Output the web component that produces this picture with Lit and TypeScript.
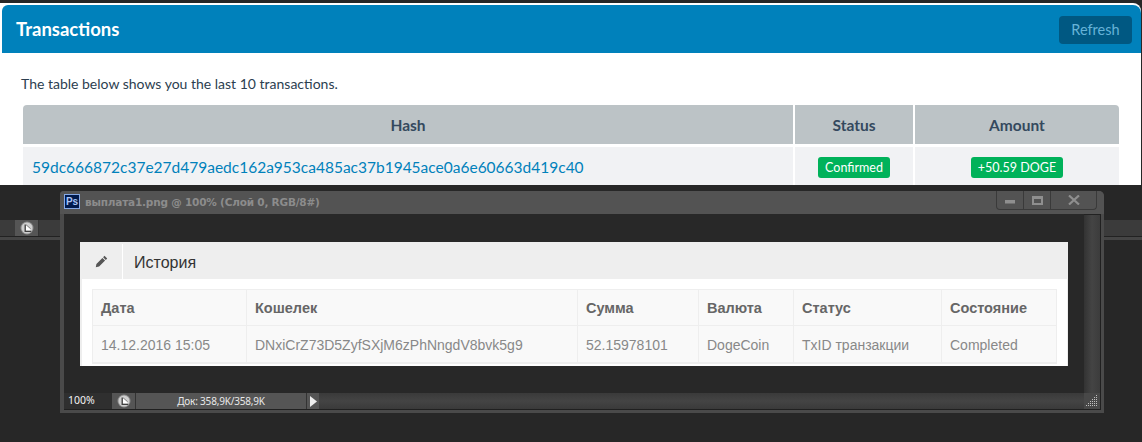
import { LitElement, html, css, svg } from "lit";
import { customElement } from "lit/decorators.js";

const clock = () => html`<svg viewBox="0 0 14 14" width="14" height="14">
  <circle cx="7" cy="7" r="6.5" fill="#8f8f8f"/>
  <circle cx="7" cy="7" r="5.5" fill="#cfcfcf"/>
  <path d="M6 4l4.5 4v1.5H6z" fill="#fff"/>
  <path d="M5.2 3.4v6.9h6" fill="none" stroke="#3f3f3f" stroke-width="1.3"/>
  <path d="M6 3.7l4.7 4.1" fill="none" stroke="#6a6a6a" stroke-width="0.8"/>
</svg>`;

const gripDots = [[10,1],[8,3],[10,3],[6,5],[8,5],[10,5],[4,7],[6,7],[8,7],[10,7],[2,9],[4,9],[6,9],[8,9],[10,9],[0,11],[2,11],[4,11],[6,11],[8,11],[10,11]];

@customElement("app-root")
export class AppRoot extends LitElement {
  static styles = css`
    :host { display: block; width: 1142px; height: 442px; overflow: hidden; background: #272727; font-family: "Liberation Sans", Arial, sans-serif; }
    .panel { margin-top: 3px; width: 1141px; height: 182px; box-sizing: border-box; background: #fff; padding: 2px 0 0 2px; border-top-right-radius: 8px; overflow: hidden; font-family: Lato, sans-serif; }
    .bar { height: 48px; box-sizing: border-box; background: #0081bb; border-radius: 6px 8px 0 0; display: flex; align-items: center; justify-content: space-between; padding: 0 9px 0 14px; }
    .bar h1 { margin: 0; font-size: 18.5px; font-weight: 700; color: #fff; }
    .refresh { width: 73px; height: 28px; margin-top: 1px; border-radius: 4px; background: #005882; color: #66b3d8; font-size: 14.5px; display: flex; align-items: center; justify-content: center; }
    .content { padding: 22px 0 0 19px; color: #2c3e50; }
    .content p { margin: 0 0 13px; font-size: 14px; line-height: 17px; color: #2c3e50; }
    .tx { margin-left: 2px; display: grid; grid-template-columns: 770px 118px 204px; column-gap: 2px; row-gap: 3px; grid-template-rows: 39px 40px; }
    .tx .th { background: #bcc3c6; font-size: 15.5px; font-weight: 700; color: #34495e; display: flex; align-items: center; justify-content: center; }
    .tx .th.first { border-top-left-radius: 4px; }
    .tx .th.last { border-top-right-radius: 4px; }
    .tx .td { background: #f1f2f4; display: flex; align-items: flex-start; justify-content: center; padding-top: 10px; box-sizing: border-box; }
    .tx .td.hash { justify-content: flex-start; padding: 10px 0 0 9px; font-size: 15.5px; line-height: 20px; color: #0081bb; }
    .tag { background: #00b25a; color: #fff; font-size: 12.5px; line-height: 21px; height: 21px; padding: 0 7px; border-radius: 3px; }
    .desktop { position: relative; height: 257px; }
    .strip { position: absolute; top: 35px; height: 16px; background: #3b3b3b; border-bottom: 1px solid #222; box-shadow: 0 3px 0 #454545; }
    .strip.l { left: 0; width: 60px; }
    .strip.r { left: 1104px; width: 38px; }
    .strip .cell { position: absolute; left: 15px; top: 0; width: 23px; height: 16px; background: #555; display: flex; align-items: center; justify-content: center; border-right: 1px solid #333; }
    .win { position: absolute; left: 60px; top: 6px; width: 1044px; height: 222px; box-sizing: border-box; background: #4a4a4a; border-radius: 4px 5px 0 0; padding: 0 3px 3px 4px; display: flex; flex-direction: column; }
    .title { height: 23px; flex: none; background: #535353; margin: 0 -3px 0 -4px; padding-left: 4px; border-radius: 4px 5px 0 0; display: flex; align-items: center; gap: 5px; position: relative; }
    .ps { width: 14px; height: 13px; margin-top: -3px; border: 1px solid #86a9e6; background: #001a4d; color: #a9c4f5; font: 700 10px/13px "Liberation Sans", sans-serif; text-align: center; }
    .ttl { font: 700 10.5px "DejaVu Sans", sans-serif; color: #8c8c8c; margin-top: -1px; white-space: nowrap; letter-spacing: -0.2px; }
    .ctl { position: absolute; left: 936px; top: 0; width: 101px; height: 19px; box-sizing: border-box; border: 1px solid #3a3a3a; border-top: none; border-radius: 0 0 4px 4px; display: grid; grid-template-columns: 27px 27px 1fr; }
    .ctl > div { display: flex; align-items: center; justify-content: center; border-right: 1px solid #3a3a3a; }
    .ctl > div:last-child { border-right: none; }
    .ctl .min { padding-top: 4px; box-sizing: border-box; }
    .main { flex: 1; display: flex; min-height: 0; background: #282828; border-right: 1px solid #202020; }
    .view { flex: 1; padding: 28px 0 0 16px; box-sizing: border-box; }
    .scroll { width: 16px; flex: none; background: linear-gradient(90deg, #333, #444 50%, #3c3c3c); border-top: 1px solid #222; box-sizing: border-box; }
    .status { height: 17px; flex: none; display: flex; background: #383838; border-right: 1px solid #202020; border-bottom: 1px solid #202020; box-sizing: border-box; font: 400 10px "Noto Sans", sans-serif; color: #e8e8e8; }
    .status .zoom { width: 48px; padding-left: 4px; box-sizing: border-box; background: #2f2f2f; line-height: 14px; font-size: 10.5px; color: #f2f2f2; }
    .status .ic { width: 23px; background: #555; border-right: 1px solid #333; display: flex; align-items: center; justify-content: center; }
    .status .doc { width: 170px; background: #555; text-align: center; line-height: 16px; font-size: 10px; letter-spacing: -0.2px; color: #e8e8e8; border-right: 1px solid #333; }
    .status .arr { width: 12px; background: #555; display: flex; align-items: center; justify-content: center; }
    .status .fill { flex: 1; background: linear-gradient(180deg, #3a3a3a, #444 50%, #3a3a3a); }
    .status .grip { width: 16px; background: #484848; display: flex; align-items: flex-end; justify-content: flex-end; padding: 0 2px 2px 0; box-sizing: border-box; }
    .doc-img { width: 988px; height: 124px; box-sizing: border-box; background: #fff; border-left: 2px solid #eee; border-right: 1px solid #eee; }
    .dh { height: 37px; margin-left: -2px; background: #eee; display: flex; align-items: stretch; color: #333; }
    .dh .pen { width: 43px; margin: 2px 0 0; border-right: 1px solid #fff; display: flex; align-items: center; justify-content: center; box-sizing: border-box; }
    .dh .t { font-size: 16px; line-height: 41px; padding-left: 11px; color: #333; }
    .grid { margin: 10px 0 0 10px; width: 965px; height: 75px; box-sizing: border-box; background: #f9f9f9; border: 1px solid #eee; border-bottom-width: 2px; display: grid; grid-template-columns: 154px 331px 121px 95px 148px 1fr; grid-template-rows: 36px 37px; font-size: 14px; }
    .grid > div { padding-left: 8px; border-right: 1px solid #eee; display: flex; align-items: center; box-sizing: border-box; white-space: nowrap; }
    .grid > div.end { border-right: none; }
    .grid .h { font-weight: 700; font-size: 14.5px; color: #666; border-bottom: 1px solid #eee; }
    .grid .c { color: #888; }
  `;

  render() {
    const heads = ["Дата", "Кошелек", "Сумма", "Валюта", "Статус", "Состояние"];
    const cells = ["14.12.2016 15:05", "DNxiCrZ73D5ZyfSXjM6zPhNngdV8bvk5g9", "52.15978101", "DogeCoin", "TxID транзакции", "Completed"];
    return html`
      <section class="panel">
        <div class="bar"><h1>Transactions</h1><div class="refresh">Refresh</div></div>
        <div class="content">
          <p>The table below shows you the last 10 transactions.</p>
          <div class="tx">
            <div class="th first">Hash</div><div class="th">Status</div><div class="th last">Amount</div>
            <div class="td hash">59dc666872c37e27d479aedc162a953ca485ac37b1945ace0a6e60663d419c40</div>
            <div class="td"><span class="tag">Confirmed</span></div>
            <div class="td"><span class="tag">+50.59 DOGE</span></div>
          </div>
        </div>
      </section>
      <section class="desktop">
        <div class="strip l"><div class="cell">${clock()}</div></div>
        <div class="strip r"></div>
        <div class="win">
          <div class="title">
            <div class="ps">Ps</div>
            <div class="ttl">выплата1.png @ 100% (Слой 0, RGB/8#)</div>
            <div class="ctl">
              <div class="min"><svg width="10" height="4" viewBox="0 0 10 4"><rect width="10" height="3.5" fill="#8f8f8f"/></svg></div>
              <div><svg width="11" height="9" viewBox="0 0 11 9"><path d="M0 0h11v9H0zM2 3v4h7V3z" fill="#8f8f8f" fill-rule="evenodd"/></svg></div>
              <div><svg width="12" height="10" viewBox="0 0 12 10"><path d="M1 0.5L11 9.5M11 0.5L1 9.5" stroke="#8f8f8f" stroke-width="2.2"/></svg></div>
            </div>
          </div>
          <div class="main">
            <div class="view">
              <div class="doc-img">
                <div class="dh">
                  <div class="pen"><svg width="13" height="13" viewBox="0 0 13 13"><path d="M9.5 0.8l2.7 2.7-1.4 1.4-2.7-2.7zM7.4 2.9l2.7 2.7-6 6-3.3.6.6-3.3z" fill="#555"/></svg></div>
                  <div class="t">История</div>
                </div>
                <div class="grid">
                  ${heads.map((h, i) => html`<div class="h ${i === 5 ? "end" : ""}">${h}</div>`)}
                  ${cells.map((c, i) => html`<div class="c ${i === 5 ? "end" : ""}">${c}</div>`)}
                </div>
              </div>
            </div>
            <div class="scroll"></div>
          </div>
          <div class="status">
            <div class="zoom">100%</div>
            <div class="ic">${clock()}</div>
            <div class="doc">Док: 358,9K/358,9K</div>
            <div class="arr"><svg width="7" height="11" viewBox="0 0 7 11"><path d="M0 0l7 5.5-7 5.5z" fill="#eee"/></svg></div>
            <div class="fill"></div>
            <div class="grip"><svg width="12" height="13" viewBox="0 0 12 13">
              ${gripDots.map(([x, y]) => svg`<rect x=${x} y=${y} width="1" height="1" fill="#c0c0c0"></rect>`)}
            </svg></div>
          </div>
        </div>
      </section>
    `;
  }
}
